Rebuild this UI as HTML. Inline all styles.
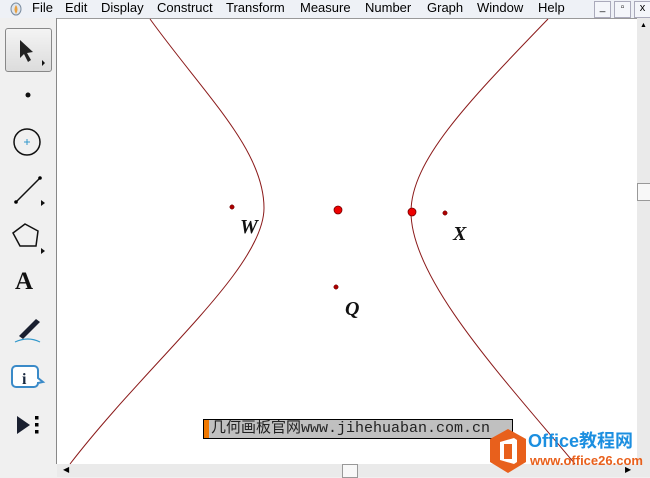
<!DOCTYPE html>
<html><head><meta charset="utf-8"><style>
body{margin:0;width:650px;height:477px;overflow:hidden;background:#f0f0f0;font-family:"Liberation Sans",sans-serif;position:relative}
.menu{position:absolute;left:0;top:0;width:650px;height:18px;background:#eef1f6;font-size:13px;color:#000}
.menu span{position:absolute;top:0px}
.tools{position:absolute;left:0;top:18px;width:56px;height:446px;background:#f0f0f0;border-right:1px solid #888}
.canvas{position:absolute;left:57px;top:18px;width:580px;height:446px;background:#fff;border-top:1px solid #999}
.vs{position:absolute;left:637px;top:18px;width:13px;height:446px;background:#eaeaea}
.hs{position:absolute;left:57px;top:464px;width:593px;height:13px;background:#eaeaea}
</style></head><body>
<div class="menu">
<svg style="position:absolute;left:10px;top:2px" width="12" height="14"><ellipse cx="6" cy="7" rx="5" ry="6" fill="#dfe6ee" stroke="#7a8ca0"/><path d="M6 3 Q9 7 6 12 Q3 7 6 3" fill="#e8a040"/></svg>
<span style="left:32px">File</span><span style="left:65px">Edit</span><span style="left:101px">Display</span><span style="left:157px">Construct</span><span style="left:226px">Transform</span><span style="left:300px">Measure</span><span style="left:365px">Number</span><span style="left:427px">Graph</span><span style="left:477px">Window</span><span style="left:538px">Help</span>
<div style="position:absolute;left:594px;top:1px;width:15px;height:15px;border:1px solid #aab;background:#f4f6fa;font-size:10px;text-align:center">_</div>
<div style="position:absolute;left:614px;top:1px;width:15px;height:15px;border:1px solid #aab;background:#f4f6fa;font-size:10px;text-align:center">▫</div>
<div style="position:absolute;left:634px;top:1px;width:15px;height:15px;border:1px solid #aab;background:#f4f6fa;font-size:11px;text-align:center">x</div>
</div>
<div class="tools">
<div style="position:absolute;left:5px;top:10px;width:45px;height:42px;border:1px solid #888;border-radius:3px;background:linear-gradient(#f4f4f4,#dcdcdc)"></div>
<svg width="56" height="446" style="position:absolute;left:0;top:0">
<path d="M20 22 L20 40 L24 36 L28 44 L31 42 L27 35 L33 34 Z" fill="#222"/>
<path d="M42 42 l3 3 -3 3z" fill="#111"/>
<circle cx="28" cy="77" r="2.5" fill="#111"/>
<circle cx="27" cy="124" r="13" fill="none" stroke="#111" stroke-width="1.5"/>
<path d="M24 124h6M27 121v6" stroke="#39c" stroke-width="1"/>
<path d="M16 184 L40 160" stroke="#111" stroke-width="1.5"/><circle cx="16" cy="184" r="1.8"/><circle cx="40" cy="160" r="1.8"/>
<path d="M41 182 l4 3 -4 3z" fill="#111"/>
<path d="M25 206 L38 213 L36 228 L20 228 L13 215 Z" fill="none" stroke="#111" stroke-width="1.5"/>
<path d="M41 230 l4 3 -4 3z" fill="#111"/>
<path d="M19 318 L36 301 L40 304 L23 321 Z" fill="#1a2030"/><path d="M15 324 Q28 318 40 324" stroke="#39c" fill="none" stroke-width="1.2"/>
<path d="M16 348 h18 a4 4 0 0 1 4 4 v8 l5 4 -5 1 a4 4 0 0 1 -4 4 h-18 a4 4 0 0 1 -4 -4 v-13 a4 4 0 0 1 4 -4z" fill="#fff" stroke="#3a8ac8" stroke-width="2"/>
<text x="22" y="366" font-family="Liberation Serif" font-weight="bold" font-size="16" fill="#1a2a40">i</text>
<path d="M17 398 L30 407 L17 416Z" fill="#1a2030"/><rect x="35" y="398" width="3.5" height="3.5"/><rect x="35" y="405" width="3.5" height="3.5"/><rect x="35" y="412" width="3.5" height="3.5"/>
</svg>
<div style="position:absolute;left:15px;top:251px;font:bold 25px/25px 'Liberation Serif',serif;color:#111">A</div>
</div>
<div class="canvas"></div>
<div class="vs"><div style="position:absolute;left:0;top:165px;width:12px;height:16px;border:1px solid #999;background:#f8f8f8"></div><div style="position:absolute;left:3px;top:4px;font-size:7px">▲</div></div>
<div class="hs"><div style="position:absolute;left:285px;top:0;width:14px;height:12px;border:1px solid #999;background:#f8f8f8"></div><div style="position:absolute;left:6px;top:1px;font-size:8px">◀</div><div style="position:absolute;left:568px;top:1px;font-size:8px">▶</div></div>
<svg width="650" height="477" style="position:absolute;left:0;top:0">
<path d="M150 19 C205 95 264 150 264 208 C264 268 150 360 70 464" fill="none" stroke="#8b1a1a" stroke-width="1"/>
<path d="M548 19 C470 100 411 160 411 212 C411 280 505 380 575 464" fill="none" stroke="#8b1a1a" stroke-width="1"/>
<circle cx="232" cy="207" r="2.2" fill="#a00" stroke="#600" stroke-width=".5"/>
<circle cx="338" cy="210" r="4" fill="#e00" stroke="#700" stroke-width=".8"/>
<circle cx="412" cy="212" r="4" fill="#e00" stroke="#700" stroke-width=".8"/>
<circle cx="445" cy="213" r="2.2" fill="#a00" stroke="#600" stroke-width=".5"/>
<circle cx="336" cy="287" r="2.2" fill="#a00" stroke="#600" stroke-width=".5"/>
<g font-family="Liberation Serif" font-style="italic" font-weight="bold" font-size="20" fill="#111">
<text x="240" y="233">W</text><text x="453" y="240">X</text><text x="345" y="315">Q</text></g>
</svg>
<div style="position:absolute;left:203px;top:419px;width:308px;height:18px;border:1px solid #000;background:#c0c0c0;font:15px 'Liberation Mono','Noto Sans CJK SC',monospace;line-height:18px;white-space:nowrap;overflow:hidden;color:#222"><span style="display:inline-block;width:5px;height:18px;background:#f07800;vertical-align:top;margin-right:2px"></span>几何画板官网www.jihehuaban.com.cn</div>
<svg width="44" height="46" style="position:absolute;left:488px;top:428px"><path d="M20 1 L38 11 L38 34 L20 45 L2 34 L2 11Z" fill="#e8601c"/><path d="M12 14 L26 10 L29 12 L29 34 L26 36 L12 32Z" fill="#fff"/><rect x="16" y="16" width="8" height="15" fill="#e8601c"/></svg>
<div style="position:absolute;left:528px;top:430px;font:bold 18px 'Liberation Sans','Noto Sans CJK SC',sans-serif;color:#1c8fe0;line-height:22px;white-space:nowrap">Office教程网</div>
<div style="position:absolute;left:530px;top:453px;font:bold 13px 'Liberation Sans',sans-serif;color:#e8601c;white-space:nowrap">www.office26.com</div>
</body></html>
